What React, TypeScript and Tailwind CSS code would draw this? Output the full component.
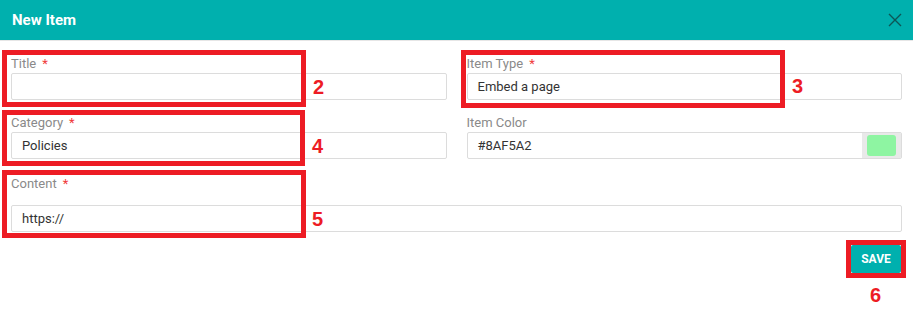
const font = { fontFamily: 'Roboto, "Liberation Sans", sans-serif' };

function Label({ text, required }: { text: string; required?: boolean }) {
  return (
    <label className="block h-[17px] text-[13px] leading-[16px] text-[#8a8a8a]">
      {text}
      {required && <span className="ml-[6px] text-[#f03a3a]">*</span>}
    </label>
  );
}

function Field({ value }: { value?: string }) {
  return (
    <div className="flex h-[27px] items-center rounded-[2px] border border-[#dcdcdc] bg-white px-[10px] text-[13px] text-[#333]">
      {value}
    </div>
  );
}

// red annotation boxes drawn on top of the form
function Mark({ className }: { className: string }) {
  return <div className={`pointer-events-none absolute border-[5px] border-[#ed1c24] ${className}`} />;
}

function Num({ n, className }: { n: string; className: string }) {
  return (
    <span
      className={`absolute text-[20px] font-bold leading-none text-[#ed1c24] ${className}`}
      style={{ fontFamily: '"Liberation Sans", Arial, sans-serif' }}
    >
      {n}
    </span>
  );
}

export default function App() {
  return (
    <div className="relative h-[309px] w-[913px] overflow-hidden bg-white" style={font}>
      <div className="flex h-[40px] items-center justify-between bg-[#00b0ae] pl-[12px] pr-[11px]">
        <span className="text-[15px] font-bold text-white">New Item</span>
        <svg width="14" height="14" viewBox="0 0 14 14" fill="none" stroke="#0d5656" strokeWidth="1.4">
          <path d="M1 1l12 12M13 1L1 13" />
        </svg>
      </div>
      <div className="h-[1px] bg-[#e6e6e6]" />

      <div className="px-[11px] pt-[15px]">
        <div className="grid grid-cols-2 gap-x-[20px]">
          <div>
            <Label text="Title" required />
            <Field />
          </div>
          <div>
            <Label text="Item Type" required />
            <Field value="Embed a page" />
          </div>
        </div>

        <div className="mt-[15px] grid grid-cols-2 gap-x-[20px]">
          <div>
            <Label text="Category" required />
            <Field value="Policies" />
          </div>
          <div>
            <Label text="Item Color" />
            <div className="flex h-[27px] items-stretch overflow-hidden rounded-[2px] border border-[#dcdcdc] bg-white text-[13px] text-[#333]">
              <div className="flex flex-1 items-center px-[10px]">#8AF5A2</div>
              <div className="flex w-[39px] items-center justify-center bg-[#e9e9e9]">
                <div className="h-[21px] w-[29px] rounded-[3px] bg-[#8ef5a2]" />
              </div>
            </div>
          </div>
        </div>

        <div className="mt-[17px]">
          <Label text="Content" required />
          <div className="mt-[12px]">
            <Field value="https://" />
          </div>
        </div>

        <div className="mt-[13px] flex justify-end pr-[1px]">
          <button className="flex h-[28px] w-[50px] items-center justify-center rounded-[2px] bg-[#00b0ae] text-[12px] font-bold text-white">
            SAVE
          </button>
        </div>
      </div>

      <Mark className="left-[2px] top-[50px] h-[57px] w-[304px]" />
      <Mark className="left-[461px] top-[50px] h-[58px] w-[324px]" />
      <Mark className="left-[2px] top-[110px] h-[56px] w-[303px]" />
      <Mark className="left-[2px] top-[170px] h-[68px] w-[304px]" />
      <Mark className="left-[846px] top-[240px] h-[38px] w-[60px]" />

      <Num n="2" className="left-[313px] top-[77px]" />
      <Num n="3" className="left-[792px] top-[76px]" />
      <Num n="4" className="left-[312px] top-[136px]" />
      <Num n="5" className="left-[312px] top-[209px]" />
      <Num n="6" className="left-[870px] top-[285px]" />
    </div>
  );
}
